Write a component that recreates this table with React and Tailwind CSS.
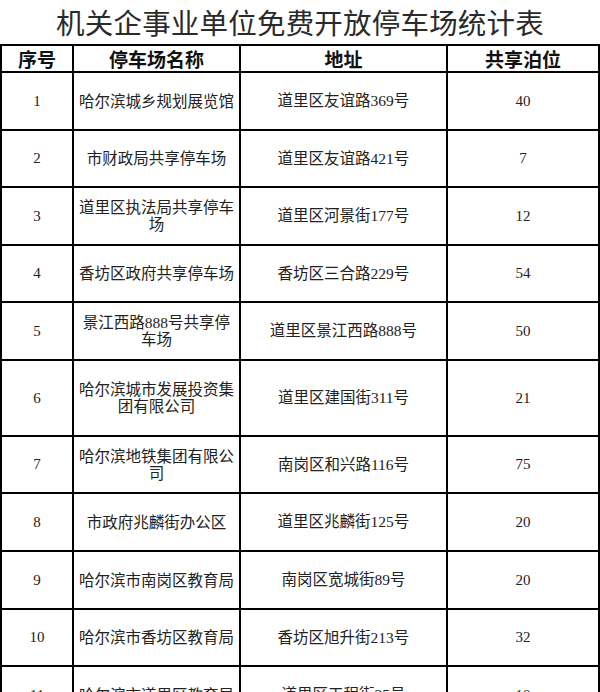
import React from "react";

const rows = [
  { no: "1", name: ["哈尔滨城乡规划展览馆"], addr: "道里区友谊路369号", num: "40", h: "h-[58px]" },
  { no: "2", name: ["市财政局共享停车场"], addr: "道里区友谊路421号", num: "7", h: "h-[57px]" },
  { no: "3", name: ["道里区执法局共享停车", "场"], addr: "道里区河景街177号", num: "12", h: "h-[58px]" },
  { no: "4", name: ["香坊区政府共享停车场"], addr: "香坊区三合路229号", num: "54", h: "h-[57px]" },
  { no: "5", name: ["景江西路888号共享停", "车场"], addr: "道里区景江西路888号", num: "50", h: "h-[58px]" },
  { no: "6", name: ["哈尔滨城市发展投资集", "团有限公司"], addr: "道里区建国街311号", num: "21", h: "h-[76px]" },
  { no: "7", name: ["哈尔滨地铁集团有限公", "司"], addr: "南岗区和兴路116号", num: "75", h: "h-[57px]" },
  { no: "8", name: ["市政府兆麟街办公区"], addr: "道里区兆麟街125号", num: "20", h: "h-[58px]" },
  { no: "9", name: ["哈尔滨市南岗区教育局"], addr: "南岗区宽城街89号", num: "20", h: "h-[58px]" },
  { no: "10", name: ["哈尔滨市香坊区教育局"], addr: "香坊区旭升街213号", num: "32", h: "h-[57px]" },
  { no: "11", name: ["哈尔滨市道里区教育局"], addr: "道里区工程街25号", num: "10", h: "h-[58px]" },
];

const App = () => {
  return (
    <div className="w-[600px] bg-white font-['Liberation_Serif','Noto_Sans_CJK_SC',serif] text-[#222]">
      <h1 className="h-[44px] flex items-center justify-center text-[28.5px] font-['Noto_Sans_CJK_SC',sans-serif] font-normal text-[#2a2a2a] tracking-[0.2px]">
        机关企事业单位免费开放停车场统计表
      </h1>

      <table className="table-fixed border-collapse w-[598px]">
        <colgroup>
          <col className="w-[72px]" />
          <col className="w-[167px]" />
          <col className="w-[207px]" />
          <col className="w-[152px]" />
        </colgroup>
        <thead>
          <tr className="h-[27px]">
            {["序号", "停车场名称", "地址", "共享泊位"].map((t) => (
              <th
                key={t}
                className="border-2 border-black p-0 text-center text-[19px] font-bold leading-none font-['Noto_Sans_CJK_SC',sans-serif] text-[#111]"
              >
                {t}
              </th>
            ))}
          </tr>
        </thead>
        <tbody>
          {rows.map((r) => (
            <tr key={r.no} className={r.h}>
              <td className="border-2 border-black p-0 text-center text-[15px]">{r.no}</td>
              <td className="border-2 border-black px-1 py-0 text-center text-[15.5px] leading-[17px]">
                {r.name.map((l, i) => (
                  <div key={i}>{l}</div>
                ))}
              </td>
              <td className="border-2 border-black p-0 text-center text-[15.5px]">{r.addr}</td>
              <td className="border-2 border-black p-0 text-center text-[15px]">{r.num}</td>
            </tr>
          ))}
        </tbody>
      </table>
    </div>
  );
};

export default App;
